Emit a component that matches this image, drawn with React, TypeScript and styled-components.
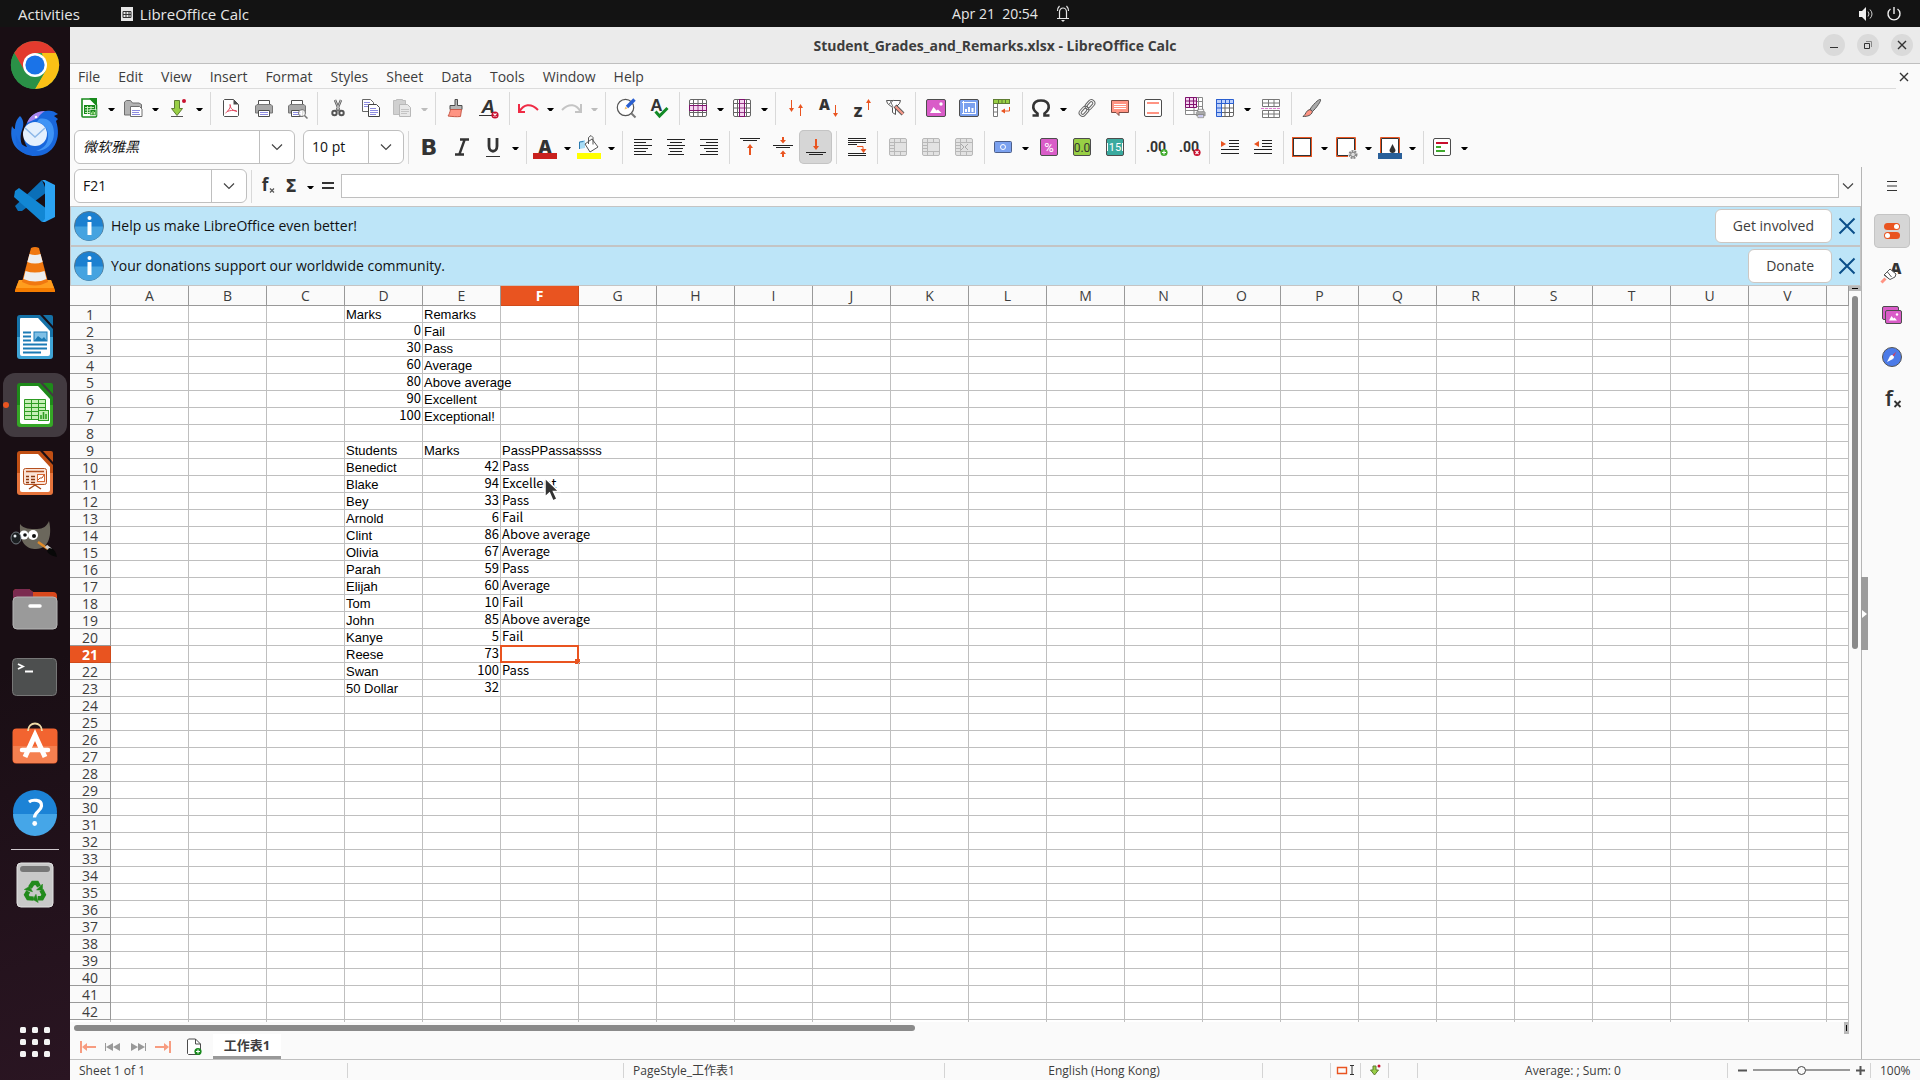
import React from 'react';
import styled, { createGlobalStyle, css } from 'styled-components';

const UI = '"Open Sans", "Noto Sans", "Noto Sans CJK SC", sans-serif';
const ORANGE = '#e95420';
const LINE = '#bfbfbf';

const GlobalStyle = createGlobalStyle`
  *, *::before, *::after { box-sizing: border-box; }
  html, body { margin: 0; padding: 0; overflow: hidden; }
  body { font-family: ${UI}; font-size: 14px; line-height: 20px; color: #3d3d3d; background: #1b1016; }
  button, input { font: inherit; color: inherit; }
  button { border: 0; padding: 0; background: none; }
  svg { display: block; flex: none; overflow: visible; }
`;

/* ---------- shell ---------- */

const Desktop = styled.div`
  display: flex;
  flex-direction: column;
  height: 100vh;
`;

const TopBar = styled.header`
  display: grid;
  grid-template-columns: 1fr auto 1fr;
  align-items: center;
  flex: none;
  height: 27px;
  background: #131313;
  color: #e6e6e6;
`;

const TopGroup = styled.div<{ $end?: boolean }>`
  display: flex;
  align-items: center;
  gap: 12px;
  padding: 0 18px;
  font-size: 15px;
  justify-content: ${p => (p.$end ? 'flex-end' : 'flex-start')};
`;

const TopButton = styled.button`
  display: flex;
  align-items: center;
  gap: 6px;
`;

const AppMenu = styled(TopButton)`
  margin-left: 28px;
`;

const Clock = styled(TopButton)`
  gap: 18px;
  padding-left: 102px;
  white-space: pre;
`;

const Workspace = styled.div`
  display: flex;
  flex: 1;
  min-height: 0;
`;

const Dock = styled.nav`
  display: flex;
  flex-direction: column;
  align-items: center;
  flex: none;
  gap: 4px;
  width: 70px;
  padding: 6px 3px;
  background: linear-gradient(165deg, #190e14 60%, #2a1522 100%);
`;

const DockItem = styled.button<{ $active?: boolean; $last?: boolean }>`
  position: relative;
  display: grid;
  place-items: center;
  flex: none;
  width: 64px;
  height: 64px;
  border-radius: 12px;
  background: ${p => (p.$active ? '#423a40' : 'transparent')};
  margin-top: ${p => (p.$last ? 'auto' : '0')};
`;

const RunningDot = styled.span`
  position: absolute;
  left: 0;
  top: 29px;
  width: 6px;
  height: 6px;
  border-radius: 50%;
  background: ${ORANGE};
`;

const DockRule = styled.hr`
  flex: none;
  width: 48px;
  height: 1px;
  margin: 0;
  border: 0;
  background: #cfc9cd;
`;

const Window = styled.main`
  display: flex;
  flex-direction: column;
  flex: 1;
  min-width: 0;
  background: #fafafa;
`;

const TitleBar = styled.div`
  display: grid;
  grid-template-columns: 1fr auto 1fr;
  align-items: center;
  flex: none;
  height: 37px;
  padding-right: 7px;
  background: #ebebeb;
  border-bottom: 1px solid ${LINE};
`;

const Title = styled.h1`
  grid-column: 2;
  margin: 0;
  padding: 2px 0 0 7px;
  font-size: 14px;
  font-weight: 700;
`;

const WindowControls = styled.div`
  display: flex;
  justify-content: flex-end;
  gap: 12px;
`;

const WindowButton = styled.button`
  display: grid;
  place-items: center;
  width: 22px;
  height: 22px;
  border-radius: 50%;
  background: #dadada;
`;

const MenuRow = styled.div`
  display: flex;
  flex: none;
  height: 25px;
`;

const MenuBar = styled.nav`
  display: flex;
  flex: 1;
  gap: 2px;
  padding-top: 2px;
  align-items: center;
  border-bottom: 1px solid #dcdcdc;
`;

const MenuItem = styled.button`
  padding: 0 8px;
`;

const CloseDocument = styled.button`
  display: grid;
  place-items: center;
  width: 24px;
  padding-right: 8px;
`;

/* ---------- toolbars ---------- */

const Toolbar = styled.div`
  display: flex;
  align-items: flex-start;
  flex: none;
  height: 39px;
  padding: 2px 4px 0;
`;

const ToolButton = styled.button<{ $drop?: boolean; $pressed?: boolean }>`
  display: flex;
  align-items: center;
  flex: none;
  gap: 7px;
  width: ${p => (p.$drop ? 44 : 33)}px;
  height: 34px;
  padding-left: ${p => (p.$drop ? 3 : 5)}px;
  ${p => p.$pressed && css`
    border-radius: 5px;
    background: #d6d6d6;
    box-shadow: inset 0 0 0 1px #c4c4c4;
  `}
`;

const Separator = styled.span`
  flex: none;
  width: 1px;
  height: 33px;
  margin: 1px 3px 0 4px;
  background: #d9d9d9;
`;

const Combo = styled.div<{ $width: number; $gap?: boolean }>`
  display: flex;
  flex: none;
  width: ${p => p.$width}px;
  height: 34px;
  margin-right: ${p => (p.$gap ? 8 : 0)}px;
  border: 1px solid ${LINE};
  border-radius: 6px;
  background: #fff;
  overflow: hidden;
`;

const ComboInput = styled.input<{ $italic?: boolean }>`
  flex: 1;
  min-width: 0;
  padding: 0 8px;
  border: 0;
  background: none;
  color: #111;
  font-style: ${p => (p.$italic ? 'italic' : 'normal')};
`;

const ComboArrow = styled.button`
  display: grid;
  place-items: center;
  width: 35px;
  border-left: 1px solid ${LINE};
`;

const Body = styled.div`
  display: flex;
  flex: 1;
  min-height: 0;
`;

const DocumentArea = styled.section`
  display: flex;
  flex-direction: column;
  flex: 1;
  min-width: 0;
`;

const FormulaRow = styled.div`
  display: flex;
  align-items: center;
  flex: none;
  height: 39px;
  padding: 0 0 1px 4px;
`;

const FormulaTools = styled.div`
  display: flex;
  align-items: center;
`;

const FormulaButton = styled.button<{ $width: number }>`
  display: flex;
  align-items: center;
  justify-content: center;
  gap: 4px;
  width: ${p => p.$width}px;
  height: 34px;
`;

const FormulaInput = styled.input`
  flex: 1;
  min-width: 0;
  height: 24px;
  padding: 0 4px;
  border: 1px solid ${LINE};
  background: #fff;
`;

const ExpandButton = styled.button`
  display: grid;
  place-items: center;
  width: 22px;
  padding-right: 4px;
`;

const InfoBar = styled.div`
  display: flex;
  align-items: center;
  flex: none;
  height: 40px;
  padding: 0 4px 0 3px;
  border: 1px solid #c4c4c4;
  background: #bde5f8;
  color: #111;
`;

const InfoText = styled.span`
  flex: 1;
  padding-left: 7px;
`;

const InfoAction = styled.button`
  height: 34px;
  padding: 0 17px;
  margin-right: 6px;
  border: 1px solid #cdc7c2;
  border-radius: 6px;
  background: #fff;
  color: #3d3d3d;
`;

const InfoClose = styled.button`
  display: grid;
  place-items: center;
  width: 18px;
  height: 34px;
`;

/* ---------- sheet ---------- */

const SheetArea = styled.div`
  display: flex;
  flex: 1;
  min-height: 0;
`;

const GridClip = styled.div`
  flex: 1;
  min-width: 0;
  overflow: hidden;
  background: #fff;
`;

const Grid = styled.table`
  width: 100%;
  table-layout: fixed;
  border-collapse: separate;
  border-spacing: 0;
  line-height: 16px;
`;

const HeadCell = styled.th<{ $active?: boolean }>`
  height: 20px;
  padding: 0;
  border-right: 1px solid #999;
  border-bottom: 1px solid #999;
  background: ${p => (p.$active ? ORANGE : '#fafafa')};
  color: ${p => (p.$active ? '#fff' : '#3d3d3d')};
  font-weight: ${p => (p.$active ? 700 : 400)};
  ${p => p.$active && css`border-color: #d04a1a;`}
`;

const RowHead = styled(HeadCell)`
  height: 17px;
  padding-top: 2px;
  line-height: 14px;
`;

type Face = 'arial' | 'cjk';

const Cell = styled.td<{ $face?: Face; $right?: boolean }>`
  position: relative;
  height: 17px;
  padding: ${p => (p.$face === 'cjk' ? 0 : 2)}px 1px 0;
  border-right: 1px solid ${LINE};
  border-bottom: 1px solid ${LINE};
  color: #000;
  font-size: 13px;
  line-height: 14px;
  white-space: nowrap;
  vertical-align: top;
  text-align: ${p => (p.$right ? 'right' : 'left')};
  font-family: ${p => (p.$face === 'cjk'
    ? '"Noto Sans CJK SC", sans-serif'
    : '"Liberation Sans", Arial, sans-serif')};
`;

const StubCell = styled(Cell)`
  height: 3px;
`;

const Selection = styled.span`
  position: absolute;
  inset: -1px;
  border: 2px solid ${ORANGE};
  &::after {
    content: '';
    position: absolute;
    right: -3px;
    bottom: -3px;
    width: 5px;
    height: 5px;
    background: ${ORANGE};
  }
`;

const Pointer = styled.svg`
  position: absolute;
  left: 42px;
  top: 0;
  z-index: 2;
`;

const VScroll = styled.div`
  display: flex;
  flex-direction: column;
  align-items: center;
  width: 12px;
`;

const SplitHandle = styled.span<{ $vertical?: boolean }>`
  display: grid;
  place-items: center;
  flex: none;
  width: ${p => (p.$vertical ? '5px' : '12px')};
  height: ${p => (p.$vertical ? '12px' : '5px')};
  background: #b9b9b9;
  &::after {
    content: '';
    width: ${p => (p.$vertical ? '1px' : '6px')};
    height: ${p => (p.$vertical ? '6px' : '1px')};
    background: #000;
  }
`;

const VThumb = styled.span`
  width: 6px;
  height: 48%;
  margin-top: 5px;
  border-radius: 3px;
  background: #8a8a8a;
`;

const HScroll = styled.div`
  display: flex;
  align-items: center;
  justify-content: space-between;
  flex: none;
  height: 12px;
  padding: 0 12px 0 4px;
`;

const HThumb = styled.span`
  width: 47.4%;
  height: 6px;
  border-radius: 3px;
  background: #8a8a8a;
`;

const TabRow = styled.div`
  display: flex;
  flex: none;
  align-items: stretch;
  height: 25px;
  padding-left: 5px;
`;

const TabNav = styled.button`
  display: grid;
  place-items: center;
  width: 25px;
`;

const AddSheet = styled(TabNav)`
  width: 38px;
`;

const SheetTab = styled.button`
  width: 68px;
  background: #fff;
  border-bottom: 3px solid #999;
  font-size: 13px;
  font-weight: 700;
`;

/* ---------- sidebar ---------- */

const Sidebar = styled.aside`
  position: relative;
  display: flex;
  flex-direction: column;
  align-items: center;
  flex: none;
  gap: 8px;
  width: 59px;
  padding-top: 2px;
  border-left: 1px solid #b5b5b5;
`;

const SideButton = styled.button<{ $active?: boolean; $menu?: boolean }>`
  display: grid;
  place-items: center;
  width: 36px;
  height: 34px;
  margin: 0 0 ${p => (p.$menu ? 3 : 0)}px 2px;
  border-radius: 5px;
  ${p => p.$active && css`
    background: #d6d6d6;
    box-shadow: inset 0 0 0 1px #c4c4c4;
  `}
`;

const SideHandle = styled.button`
  position: absolute;
  left: -1px;
  top: 46%;
  display: grid;
  place-items: center;
  width: 7px;
  height: 73px;
  background: #9c9c9c;
`;

/* ---------- status bar ---------- */

const StatusBar = styled.footer`
  display: grid;
  grid-template-columns: 278px 276px 321px 318px 68px 30px 28px 29px 1fr 143px 49px;
  align-items: center;
  flex: none;
  height: 21px;
  border-top: 1px solid ${LINE};
`;

const StatusItem = styled.div<{ $align?: 'left' | 'center' | 'right' }>`
  display: flex;
  align-items: center;
  justify-content: ${p => p.$align || 'center'};
  height: 15px;
  padding: 0 8px 0 9px;
  border-right: 1px solid #d4d4d4;
  font-size: 12px;
  line-height: 15px;
  white-space: nowrap;
  &:last-child { border-right: 0; }
`;

const ZoomItem = styled(StatusItem)`
  gap: 6px;
  padding: 0 5px 0 10px;
`;

const ZoomSlider = styled.input`
  flex: 1;
  min-width: 0;
  height: 12px;
  margin: 0;
  appearance: none;
  background: linear-gradient(#999, #999) center / 100% 2px no-repeat;
  &::-webkit-slider-thumb {
    appearance: none;
    width: 9px;
    height: 9px;
    border: 1px solid #444;
    border-radius: 50%;
    background: #fafafa;
  }
`;

/* ---------- icon drawings (24 x 24 unless noted) ---------- */

const G = '#4d4d4d';
const R = '#c8102e';

const Svg = ({ children, w = 24, h = 24, vb }: { children: React.ReactNode; w?: number; h?: number; vb?: string }) => (
  <svg width={w} height={h} viewBox={vb || `0 0 ${w} ${h}`} fill="none" aria-hidden="true">{children}</svg>
);

const Letter = ({ x, y, s, c = '#333', i, w = 700, f = 'Liberation Sans', children }: {
  x: number; y: number; s: number; c?: string; i?: boolean; w?: number; f?: string; children: string;
}) => (
  <text x={x} y={y} fontSize={s} fill={c} fontWeight={w} fontStyle={i ? 'italic' : 'normal'} fontFamily={`"${f}", sans-serif`} textAnchor="middle">{children}</text>
);

const Badge = ({ x, y, c, plus }: { x: number; y: number; c: string; plus?: boolean }) => (
  <g>
    <circle cx={x} cy={y} r="3.6" fill={c} />
    <path d={plus ? `M${x - 2} ${y}h4M${x} ${y - 2}v4` : `M${x - 1.5} ${y - 1.5}l3 3m0-3l-3 3`} stroke="#fff" strokeWidth="1.1" />
  </g>
);

const printer = (
  <g>
    <path d="M6.5 9V4.5h11V9" fill="#fff" stroke={G} />
    <path d="M5 8.500h14l1.500 1.500v7H3.500v-7z" fill="#a8a8a8" stroke="#777" />
    <path d="M6.500 14.500h11v6h-11z" fill="#fff" stroke={G} />
    <path d="M8 16.500h8M8 18.500h8" stroke="#8d8ce0" />
  </g>
);

const tableGrid = (c: string, over?: React.ReactNode) => (
  <g>
    <rect x="3.500" y="3.500" width="17" height="17" rx="1.500" fill="#fff" stroke={c} />
    <path d="M3.500 7.500h17M3.500 16.500h17M7.500 3.500v17M12 3.500v17M16.500 3.500v17M3.500 12h17" stroke={c} />
    {over}
  </g>
);

const mergeBase = (
  <g>
    <rect x="3.500" y="3.500" width="17" height="17" rx="1.500" fill="#e2e2e2" stroke="#b8b8b8" />
    <path d="M3.500 7.500h17M3.500 16.500h17M8.500 3.500v17M14.500 3.500v4M14.500 16.500v4M3.500 10.500h5M3.500 13.500h5" stroke="#b8b8b8" />
  </g>
);

const lines = (list: number[][], c = '#222', sw = 1) => list.map(([x1, x2, y], k) => (
  <path key={k} d={`M${x1} ${y}.5H${x2}`} stroke={c} strokeWidth={sw} />
));

const icons: Record<string, React.ReactNode> = {
  new: <>
    <path d="M5 3h8.500l6 6v11a1 1 0 0 1-1 1H6a1 1 0 0 1-1-1z" fill="#fff" stroke="#188a1c" strokeWidth="1.600" />
    <path d="M12 2h8v8l-2.500-3z" fill="#188a1c" />
    <rect x="7" y="9" width="11" height="9" fill="#188a1c" />
    <path d="M8 11.500h9M8 14h9M8 16.500h6M10.500 10v8M14 10v5" stroke="#d6f5c8" strokeWidth=".9" />
    <rect x="13" y="13.500" width="6" height="6" fill="#188a1c" stroke="#fff" strokeWidth=".6" />
    <path d="M14.500 18.500v-2M16 18.500v-3.500M17.500 18.500v-2.500" stroke="#b8f09c" />
  </>,
  open: <>
    <path d="M3.500 19V6l2-1.500h4L11.500 7H18l2.500 1.500V19z" fill="#b3b3b3" stroke="#6e6e6e" />
    <path d="M9.500 10.500h9l2.500 2.500v7.500H9.500z" fill="#fff" stroke="#6e6e6e" />
    <path d="M11 14.500h8M11 16.500h7M11 18.500h8" stroke="#8d8ce0" />
  </>,
  save: <>
    <path d="M9.500 4.500h5v8h3l-5.500 7-5.500-7h3z" fill="#98cf45" stroke="#5f7d33" />
    <path d="M6 20.500h12" stroke="#555" />
    <circle cx="19" cy="5" r="2" fill={R} />
  </>,
  pdf: <>
    <path d="M4.500 4.500l1-1h9l5 5v11l-1 1h-13l-1-1z" fill="#fff" stroke={G} />
    <path d="M14.500 3.500v5h5z" fill={G} />
    <path d="M11 8.500c1.500 2-2 7-4.500 8.500M11 8.500c0 4 3.500 6.500 7 7M8 15.500c3-1 6-1.500 9.500-.8" stroke="#e0485e" />
  </>,
  print: printer,
  preview: <>
    {printer}
    <circle cx="17" cy="17" r="3.500" fill="#fff" fillOpacity=".8" stroke="#777" />
    <path d="M19.500 19.500l3 3" stroke="#777" strokeWidth="1.500" />
  </>,
  cut: <>
    <path d="M9 4l4.500 11M15 4l-4.500 11" stroke="#555" strokeWidth="2.400" />
    <path d="M9 4l4.500 11M15 4l-4.500 11" stroke="#ddd" strokeWidth=".8" />
    <circle cx="8.500" cy="17" r="2.200" stroke="#555" strokeWidth="2" />
    <circle cx="15.500" cy="17" r="2.200" stroke="#555" strokeWidth="2" />
  </>,
  copy: <>
    <path d="M3.500 3.500h8l3 3v9h-11z" fill="#fff" stroke="#666" />
    <path d="M5 6.500h6M5 8.500h4M5 10.500h4" stroke="#8d8ce0" />
    <path d="M9.500 8.500h8l3 3v9h-11z" fill="#fff" stroke="#444" />
    <path d="M11 12.500h6M11 14.500h8M11 16.500h8M11 18.500h6" stroke="#8d8ce0" />
  </>,
  paste: <>
    <path d="M3.500 4.500h3v-1h6v1h3v14h-12z" fill="#d0d0d0" stroke="#bdbdbd" />
    <path d="M9.500 8.500h8l3 3v9h-11z" fill="#e8e8e8" stroke="#b8b8b8" />
    <path d="M11 13.500h8M11 15.500h8M11 17.500h6" stroke="#c4c4c4" />
  </>,
  clone: <>
    <path d="M11 3.500h2.500v6h4.500v4H6v-4h5z" fill="#b5b5b5" stroke={G} />
    <path d="M6.500 13.500h11l-1 7c-4 .5-8.500 0-12.500-.5 1-1 2-4 2.500-6.500z" fill="#ff9483" stroke="#c85a49" />
  </>,
  clear: <>
    <Letter x={11} y={17} s={19} i>A</Letter>
    <path d="M2 19.500h14" stroke="#333" />
    <Badge x={18} y={19} c={R} />
  </>,
  undo: <path d="M3 8v8h6M3.500 15.500c4-7 11-9 18.500-1.500" stroke="#ef2b45" strokeWidth="2" />,
  redo: <path d="M21 8v8h-6M20.500 15.500c-4-7-11-9-18.500-1.500" stroke="#c4c4c4" strokeWidth="2" />,
  find: <>
    <circle cx="11.500" cy="11.500" r="8.200" fill="#fff" stroke="#555" strokeWidth="1.200" />
    <path d="M17.500 17.500l4 4" stroke="#777" strokeWidth="2" />
    <path d="M13 11l7.500-7.500" stroke="#2a5fd0" strokeWidth="3.400" />
    <path d="M10.500 13.500l1-3 2 2z" fill="#f5c06a" />
  </>,
  spell: <>
    <Letter x={9.500} y={15} s={17}>A</Letter>
    <path d="M8.500 15.500l4 4.500 8-8" stroke="#128a25" strokeWidth="3" />
  </>,
  row: tableGrid('#666', <><rect x="3.500" y="9.500" width="17" height="5" fill="#f4d5f0" stroke="#81136f" /><path d="M7.500 10v5M12 10v5M16.500 10v5" stroke="#81136f" strokeWidth=".8" /></>),
  column: tableGrid('#666', <><rect x="9.500" y="3.500" width="5" height="17" fill="#f4d5f0" stroke="#81136f" /><path d="M10 7.500h5M10 12h5M10 16.500h5" stroke="#81136f" strokeWidth=".8" /></>),
  sort: <>
    <path d="M7.500 4v11M16.500 9v11" stroke={ORANGE} />
    <path d="M5 12h5l-2.500 4zM14 12h5l-2.500-4z" fill={ORANGE} />
  </>,
  asc: <><Letter x={7.500} y={14} s={15} f="Open Sans" w={800}>A</Letter><path d="M18.500 9v9" stroke={ORANGE} /><path d="M16 17h5l-2.500 4z" fill={ORANGE} /></>,
  desc: <><Letter x={8} y={21} s={14} f="Open Sans" w={800}>Z</Letter><path d="M18.500 6v8" stroke={ORANGE} /><path d="M16 7h5l-2.500-4z" fill={ORANGE} /></>,
  filter: <>
    <path d="M3.500 4.500h14l-1 3-4 4v7l-3-2v-5l-5-4z" fill="#fff" stroke="#555" />
    <path d="M7 4l3 7M11 4l-5 4" stroke="#777" />
    <path d="M12 10l8 8" stroke="#555" strokeWidth="4" />
    <path d="M12.500 10.500l7.500 7.500" stroke="#f5998a" strokeWidth="2.400" />
  </>,
  image: <>
    <rect x="2.500" y="3.500" width="19" height="17" rx="1.500" fill="#d95cc8" stroke={G} />
    <path d="M6 17l3.500-6 3 3.500 1.500-1 3.500 3.500z" fill="#fff" />
    <circle cx="17" cy="8" r="1.700" fill="#fff" />
  </>,
  chart: <>
    <rect x="2.500" y="3.500" width="19" height="17" rx="1.500" fill="#7ba1ef" stroke={G} />
    <path d="M6.500 5v13M5 17.500h14M5 6.500h14M18.500 6v12" stroke="#fff" />
    <path d="M9 16v-3M12 16v-5M15.500 16v-4" stroke="#fff" strokeWidth="2" />
  </>,
  pivot: <>
    <path d="M3.500 7.500h4v13h-4zM3.500 11.500h4M3.500 16h4" fill="#fff" stroke="#777" />
    <rect x="3.500" y="3.500" width="16" height="4" fill="#98cf45" stroke="#5f7d33" />
    <path d="M8.500 3.500v4M12 3.500v4M15.500 3.500v4" stroke="#5f7d33" />
    <path d="M19.500 11v4h-7" stroke={ORANGE} /><path d="M11 15l4-2.500v5z" fill={ORANGE} />
  </>,
  omega: <path d="M3.500 19.500h5v-2C2 13 3 4.500 12 4.500S22 13 15.500 17.500v2h5" stroke="#333" strokeWidth="2.600" />,
  link: <g transform="rotate(-48 12 12)" stroke="#666" strokeWidth="1">
    <rect x="2" y="8.500" width="11" height="7" rx="3.500" /><rect x="4" y="10.500" width="7" height="3" rx="1.500" />
    <rect x="11" y="8.500" width="11" height="7" rx="3.500" /><rect x="13" y="10.500" width="7" height="3" rx="1.500" />
  </g>,
  comment: <>
    <path d="M3.500 4.500h17v12H11v3l-3-3H3.500z" fill="#ff9483" stroke="#7a4a42" />
    <path d="M6 8.500h12M6 10.500h12M6 12.500h12" stroke="#fff" />
  </>,
  header: <>
    <rect x="3.500" y="3.500" width="17" height="17" rx="1.500" fill="#fff" stroke={G} />
    <path d="M6 7h12M6 17h12" stroke="#ff9483" strokeWidth="2" />
  </>,
  range: <>
    <path d="M3.500 1.500h17v17h-17zM12 1.500v17M16.500 1.500v17M3.500 14.500h17M3.500 10.500h17M3.500 5.500h17" fill="#fff" stroke="#888" />
    <path d="M3.500 1.500h11v10h-11zM7.500 1.500v10M11.500 1.500v10M3.500 5h11M3.500 8.500h11" fill="#f4d5f0" stroke="#81136f" />
    <g transform="translate(12.500 11) scale(.52)">{printer}</g>
  </>,
  freeze: <>
    {tableGrid('#666')}
    <path d="M3.500 3.500h17v4h-17zM3.500 3.500h5v17h-5z" fill="#bcd0fb" stroke="#2a5fd0" />
    <path d="M3.500 7.500h17M3.500 12h5M3.500 16.500h5M12.500 3.500v4M16.500 3.500v4M8.500 3.500v17" stroke="#2a5fd0" />
  </>,
  split: <>
    <path d="M3.500 3.500h17v7h-17zM3.500 14.500h17v7h-17zM3.500 7h17M3.500 18h17M9.500 3.500v7M15 3.500v7M9.500 14.500v7M15 14.500v7" fill="#fff" stroke="#777" />
    <path d="M2 12.500h20" stroke="#e07bd2" strokeDasharray="3 1" />
  </>,
  brush: <>
    <path d="M20.500 3.500c1 1-4 8.500-8 12l-2.500-2c2-4 9-11 10.500-10z" fill="#aaa" stroke="#555" />
    <path d="M10 13.500l2.500 2c-1 4-5 5-9.500 5 3-2 3-6.500 7-7z" fill="#ff9483" stroke="#555" />
  </>,
  bold: <Letter x={12} y={20} s={22} f="DejaVu Sans">B</Letter>,
  italic: <path d="M10 4.500h9M5 19.500h9M14.500 5L9.500 19" stroke="#333" strokeWidth="2.400" />,
  underline: <><path d="M8 3v8c0 7 8 7 8 0V3" stroke="#333" strokeWidth="2.800" /><path d="M5 21.500h14" stroke="#333" /></>,
  fontColor: <><Letter x={12} y={18} s={18} f="Open Sans" w={800}>A</Letter><path d="M0 21h24" stroke="#c9211e" strokeWidth="6" /></>,
  highlight: <>
    <path d="M2.500 14V6.500L8 5v8z" fill="#a8dcf5" /><path d="M2.500 14V7l4-.5" stroke="#2a7ab0" />
    <path d="M8 9l7-5 6 8-8 5z" fill="#fff" stroke="#555" /><path d="M11.500 9V2.500l2.500-2 2 2v7" stroke="#555" />
    <path d="M0 21h24" stroke="#ff0" strokeWidth="6" />
  </>,
  left: lines([[3, 21, 4], [3, 15, 7], [3, 21, 10], [3, 17, 13], [3, 15, 16], [3, 21, 19]]),
  center: lines([[3, 21, 4], [6, 18, 7], [3, 21, 10], [5, 19, 13], [6, 18, 16], [4, 20, 19]]),
  right: lines([[3, 21, 4], [9, 21, 7], [3, 21, 10], [7, 21, 13], [9, 21, 16], [3, 21, 19]]),
  top: <>{lines([[2, 22, 3], [5, 19, 5]])}<path d="M12 12v8" stroke={ORANGE} strokeWidth="2" /><path d="M9 13h6l-3-4z" fill={ORANGE} /></>,
  middle: <>{lines([[2, 22, 10], [5, 19, 12]])}<path d="M12 2v4M12 19v3" stroke={ORANGE} strokeWidth="2" /><path d="M9 5h6l-3 3.500zM9 19h6l-3-3.500z" fill={ORANGE} /></>,
  bottom: <>{lines([[2, 22, 17], [5, 19, 19]])}<path d="M12 4v8" stroke={ORANGE} strokeWidth="2" /><path d="M9 11h6l-3 4z" fill={ORANGE} /></>,
  wrap: <>{lines([[3, 21, 3], [3, 21, 5], [3, 21, 7], [3, 12, 9], [3, 21, 18], [3, 21, 20]])}<path d="M12 11.500h6v3" stroke={ORANGE} /><path d="M15.500 14h6L18.500 18z" fill={ORANGE} /></>,
  mergeA: mergeBase,
  mergeB: mergeBase,
  mergeC: <>{mergeBase}<path d="M9 9l3 3-3 3M16 9l-3 3 3 3" stroke="#aaa" /></>,
  currency: <><rect x="3.500" y="6.500" width="17" height="11" rx="1" fill="#7ba1ef" stroke="#4d5f8a" /><circle cx="12" cy="12" r="2.500" stroke="#fff" /></>,
  percent: <><rect x="3.500" y="3.500" width="17" height="17" rx="1.500" fill="#d95cc8" stroke={G} /><Letter x={12} y={17} s={13} c="#fff" w={400} f="Roboto">%</Letter></>,
  number: <><rect x="3.500" y="3.500" width="17" height="17" rx="1.500" fill="#98cf45" stroke={G} /><Letter x={12} y={17} s={12} w={400} f="Roboto">0.0</Letter></>,
  date: <><rect x="3.500" y="3.500" width="17" height="17" rx="1.500" fill="#3aaa9f" stroke={G} /><Letter x={12} y={16} s={11} c="#fff" w={400} f="Roboto">15</Letter><path d="M4.500 8v8M19.500 8v8" stroke="#fff" /></>,
  addDec: <><Letter x={12} y={17} s={14} f="Roboto">.00</Letter><Badge x={20} y={17.500} c="#3faa2c" plus /></>,
  delDec: <><Letter x={12} y={17} s={14} f="Roboto">.00</Letter><Badge x={20} y={17.500} c={R} /></>,
  indent: <>{lines([[11, 21, 5], [11, 21, 8], [11, 21, 11], [3, 21, 14], [3, 21, 18]], '#222')}<path d="M3 6l5 3-5 3z" fill={ORANGE} /></>,
  outdent: <>{lines([[11, 21, 5], [11, 21, 8], [11, 21, 11], [3, 21, 14], [3, 21, 18]], '#222')}<path d="M8 6L3 9l5 3z" fill={ORANGE} /></>,
  border: <><rect x="2.500" y="2.500" width="19" height="19" fill="#fff" stroke={ORANGE} /><rect x="3.500" y="3.500" width="17" height="17" stroke="#333" /></>,
  borderStyle: <><path d="M21.500 15V2.500h-19v19H14" fill="#fff" stroke={ORANGE} /><path d="M20.500 15V3.500h-17v17H14" stroke="#333" /><circle cx="19" cy="19.500" r="3" stroke="#888" strokeWidth="3" strokeDasharray="1.700 .8" /><circle cx="19" cy="19.500" r="2.300" fill="#ddd" stroke="#888" /></>,
  borderColor: <><path d="M2.500 21V2.500h19V21" fill="#fff" stroke={ORANGE} /><path d="M3.500 21V3.500h17V21" stroke="#333" /><path d="M14.500 9l3 6a3 3 0 1 1-6 0z" fill="#333" /><path d="M0 21h24" stroke="#2a6099" strokeWidth="6" /></>,
  cond: <><rect x="3.500" y="3.500" width="17" height="17" rx="1.500" fill="#fff" stroke={G} /><path d="M6 8h12" stroke={R} strokeWidth="2" /><path d="M6 12h5M6 16h9" stroke="#3faa2c" strokeWidth="2" /></>,
  sigma: <Letter x={12} y={18} s={17} f="DejaVu Sans">Σ</Letter>,
  fx: <><Letter x={10} y={17} s={17} f="Open Sans">f</Letter><path d="M15 14.500l4 4m0-4l-4 4" stroke="#555" strokeWidth="1.200" /></>,
  equals: <path d="M6 9h12M6 14h12" stroke="#333" strokeWidth="2" />,
  sideProps: <>
    <rect x="4" y="4" width="16" height="7" rx="3.500" fill={ORANGE} /><circle cx="16.500" cy="7.500" r="2.500" fill="#fff" />
    <rect x="4" y="13" width="16" height="7" rx="3.500" fill={ORANGE} /><circle cx="7.500" cy="16.500" r="2.500" fill="#fff" />
  </>,
  sideStyles: <>
    <Letter x={16} y={13} s={15} f="Open Sans" w={800}>A</Letter>
    <path d="M1.500 21.500l4-4" stroke="#ff9483" strokeWidth="3" />
    <path d="M4 14l6-6 6 5-1 3-5 2.500zM5 14l4 4M7.500 11l4 5" fill="#fff" stroke="#555" />
  </>,
  sideGallery: <>
    <rect x="2.500" y="3.500" width="16" height="13" rx="1.500" fill="#d95cc8" stroke={G} />
    <rect x="5.500" y="7.500" width="16" height="13" rx="1.500" fill="#d95cc8" stroke={G} />
    <path d="M9 17.500l2.500-4.500 2 2.500 1-1 2.500 3z" fill="#fff" /><circle cx="17" cy="11.500" r="1.200" fill="#fff" />
  </>,
  sideNav: <>
    <circle cx="12" cy="12" r="9.500" fill="#4c7be8" stroke="#555" />
    <path d="M7 17l3-6 3 3z" fill="#fff" /><circle cx="12" cy="12" r="2" fill="#fff" /><path d="M12.500 10l4-3.500-2.500 5z" fill="#d04060" />
  </>,
  sideFx: <><Letter x={9} y={19} s={22} w={600} f="Open Sans">f</Letter><path d="M14.500 14l6 6m0-6l-6 6" stroke="#333" strokeWidth="1.800" /></>,
};

const Arrow = ({ muted }: { muted?: boolean }) => (
  <Svg w={7} h={24}><path d="M0 12h7l-2.500 3h-2z" fill={muted ? '#bdbdbd' : '#000'} /></Svg>
);
const Chevron = () => <Svg w={12} h={12}><path d="M1 3.500l5 5 5-5" stroke="#444" strokeWidth="1.200" /></Svg>;

type Tool = { id: string; label: string; drop?: boolean; muted?: boolean; pressed?: boolean } | '|';
const t = (id: string, label: string, drop?: boolean, extra?: { muted?: boolean; pressed?: boolean }): Tool => ({ id, label, drop, ...extra });

const standardTools: Tool[] = [
  t('new', 'New', true), t('open', 'Open', true), t('save', 'Save', true), '|',
  t('pdf', 'Export as PDF'), t('print', 'Print'), t('preview', 'Print preview'), '|',
  t('cut', 'Cut'), t('copy', 'Copy'), t('paste', 'Paste', true, { muted: true }), '|',
  t('clone', 'Clone formatting'), t('clear', 'Clear formatting'), '|',
  t('undo', 'Undo', true), t('redo', 'Redo', true, { muted: true }), '|',
  t('find', 'Find and replace'), t('spell', 'Spelling'), '|',
  t('row', 'Row', true), t('column', 'Column', true), '|',
  t('sort', 'Sort'), t('asc', 'Sort ascending'), t('desc', 'Sort descending'), t('filter', 'AutoFilter'), '|',
  t('image', 'Insert image'), t('chart', 'Insert chart'), t('pivot', 'Insert pivot table'), '|',
  t('omega', 'Insert special character', true), t('link', 'Insert hyperlink'), t('comment', 'Insert comment'), t('header', 'Headers and footers'), '|',
  t('range', 'Define print area'), t('freeze', 'Freeze rows and columns', true), t('split', 'Split window'), '|',
  t('brush', 'Show draw functions'),
];

const formatTools: Tool[] = [
  '|', t('bold', 'Bold'), t('italic', 'Italic'), t('underline', 'Underline', true), '|',
  t('fontColor', 'Font color', true), t('highlight', 'Background color', true), '|',
  t('left', 'Align left'), t('center', 'Center horizontally'), t('right', 'Align right'), '|',
  t('top', 'Align top'), t('middle', 'Center vertically'), t('bottom', 'Align bottom', false, { pressed: true }), '|',
  t('wrap', 'Wrap text'), '|',
  t('mergeA', 'Merge and center', false, { muted: true }), t('mergeB', 'Merge cells', false, { muted: true }), t('mergeC', 'Unmerge cells', false, { muted: true }), '|',
  t('currency', 'Format as currency', true), t('percent', 'Format as percent'), t('number', 'Format as number'), t('date', 'Format as date'), '|',
  t('addDec', 'Add decimal place'), t('delDec', 'Delete decimal place'), '|',
  t('indent', 'Increase indent'), t('outdent', 'Decrease indent'), '|',
  t('border', 'Borders', true), t('borderStyle', 'Border style', true), t('borderColor', 'Border color', true), '|',
  t('cond', 'Conditional formatting', true),
];

const Tools = ({ items }: { items: Tool[] }) => (
  <>
    {items.map((item, k) => item === '|' ? <Separator key={k} /> : (
      <ToolButton key={item.id} type="button" aria-label={item.label} $drop={item.drop} $pressed={item.pressed} disabled={item.muted}>
        <Svg>{icons[item.id]}</Svg>
        {item.drop && <Arrow muted={item.muted} />}
      </ToolButton>
    ))}
  </>
);

/* ---------- dock drawings ---------- */

const docFrame = (id: string, a: string, b: string, inner: React.ReactNode) => (
  <>
    <defs><linearGradient id={id} x1="0" y1="0" x2="0" y2="1"><stop offset=".5" stopColor={a} /><stop offset=".5" stopColor={b} /></linearGradient></defs>
    <path d="M9 2h20l13 14v27a3 3 0 0 1-3 3H9a3 3 0 0 1-3-3V5a3 3 0 0 1 3-3z" fill={`url(#${id})`} />
    <path d="M10 5h17l12 13v23a2 2 0 0 1-2 2H11a2 2 0 0 1-2-2V6a1 1 0 0 1 1-1z" fill="#fff" />
    <path d="M32 2h8a2 2 0 0 1 2 2v9z" fill={a} />
    {inner}
  </>
);

const dockIcons: { label: string; art: React.ReactNode; active?: boolean }[] = [
  { label: 'Google Chrome', art: <>
    <circle cx="24" cy="24" r="24" fill="#34a853" />
    <path d="M3.200 12A24 24 0 0 1 44.800 12H24L13.600 30z" fill="#e33b2e" />
    <path d="M44.800 12A24 24 0 0 1 24 48l10.400-18L31 12z" fill="#fbc116" />
    <path d="M3.200 12L13.600 30 24 36l10.400-6L24 48A24 24 0 0 1 3.200 12z" fill="#2a9147" />
    <circle cx="24" cy="24" r="12" fill="#fff" /><circle cx="24" cy="24" r="9.600" fill="#1a73e8" />
  </> },
  { label: 'Thunderbird', art: <g transform="translate(0 1)">
    <path d="M9 6c4 4 4 9 2 14-3 8-1 16 5 24C4 41-2 30 1 16c1 2 2 3 3 3 0-5 1-9 5-13z" fill="#1d6fe0" />
    <path d="M16 13C19 5 27 1 35 1c5-1 8 0 12 3l-4 2 4 3-2 2c6 17-2 35-21 35C11 46 3 37 5 25c3 8 7 11 11 12-4-7-5-16 0-24z" fill="#1867dc" />
    <path d="M16 13C19 5 26 1 34 1c-3 2-6 4-7 7-3 1-7 3-11 5z" fill="#a987f0" />
    <path d="M28 9c7-2 15 2 15 14 0 11-8 18-18 18 9-3 13-9 12-17-1-7-5-11-11-12z" fill="#3f94f5" />
    <circle cx="24" cy="24" r="12" fill="#e4f0fd" />
    <path d="M14 18l10 9 10-9" stroke="#8db8e8" strokeWidth="1.500" />
    <circle cx="25" cy="7" r="1.300" fill="#fff" />
  </g> },
  { label: 'Visual Studio Code', art: <>
    <path d="M31 3L4 29l3 5h4l25-19z" fill="#0b6fb8" />
    <path d="M4 14l4-3 28 21v11l-5 2L3 20z" fill="#1287d4" />
    <path d="M31 3l3 0 10 5v32l-10 5h-3l3-3V6z" fill="#2ba3f3" />
  </> },
  { label: 'VLC', art: <>
    <path d="M8 35h32l4 10v2H4v-2z" fill="#f57c00" /><path d="M8 35h32l3 8H5z" fill="#ff9d1e" />
    <path d="M20 3q4-2 8 0l9 34q-13 7-26 0z" fill="#f07810" />
    <path d="M18.500 9q5.500 2 11 0l2.200 8q-7.700 3-15.400 0zM14.500 26q9.500 3 19 0l2 8q-11 5-23 0z" fill="#eee" />
  </> },
  { label: 'LibreOffice Writer', art: docFrame('dw', '#1572a8', '#3fa4d6', <>
    <path d="M12 19.500h8M12 23.500h8M12 27.500h8M12 31.500h24M12 35.500h24M12 39.500h18" stroke="#1b7bb5" strokeWidth="2" />
    <rect x="23" y="19" width="13" height="9" fill="#7fc0e6" stroke="#1b7bb5" /><path d="M23 28l4-5 4 3 2-2 3 4z" fill="#1b7bb5" />
  </>) },
  { label: 'LibreOffice Calc', active: true, art: docFrame('dc', '#1e8a1a', '#35a726', <>
    <path d="M13.500 18.500h21v20h-21zM13.500 22.500h21M13.500 26.500h21M13.500 30.500h21M13.500 34.500h21M20.500 18.500v20M27.500 18.500v20" fill="#c5efb5" stroke="#2d9b22" />
    <rect x="27.500" y="29.500" width="10" height="10" fill="#c5efb5" stroke="#2d9b22" /><path d="M30 38v-4M32.500 38v-7M35 38v-5" stroke="#2d9b22" strokeWidth="1.600" />
  </>) },
  { label: 'LibreOffice Impress', art: docFrame('di', '#c04f14', '#e5743c', <>
    <rect x="12.500" y="19.500" width="23" height="16" rx="2" fill="#fbe3d6" stroke="#b5501f" />
    <path d="M15 22.500h18" stroke="#b5501f" strokeWidth="1.500" /><path d="M15 27.500h3M20 27.500h4M15 30.500h3M20 30.500h4M15 33.500h3M20 33.500h4" stroke="#8a3a10" strokeWidth="1.600" />
    <rect x="26.500" y="25.500" width="7" height="7" fill="#fff" stroke="#d86a35" /><path d="M27 31l2-2 2 0 2-3" stroke="#b5501f" />
    <path d="M24 36l-6 4M24 36l6 4" stroke="#a34514" strokeWidth="1.500" />
  </>) },
  { label: 'GIMP', art: <g transform="translate(0 1)">
    <path d="M9 6c4 5 10 5 17 5 6 0 10-3 12-8 3 12 1 28-13 28C16 31 8 26 9 6z" fill="#6b675c" />
    <circle cx="13" cy="17" r="4.500" fill="#fff" /><circle cx="22" cy="17" r="5" fill="#fff" /><circle cx="14" cy="17" r="1.800" fill="#111" /><circle cx="23" cy="18" r="2" fill="#111" />
    <ellipse cx="5" cy="20" rx="5" ry="6" fill="#1c1f22" stroke="#8a949c" strokeWidth=".8" /><circle cx="4" cy="18" r="1.500" fill="#e8eef2" />
    <path d="M27 24l10 7" stroke="#e08a28" strokeWidth="2.600" /><path d="M35 28l5 4" stroke="#ccc" strokeWidth="3.500" /><path d="M38 30c4 0 7 3 8 9-5-1-9-3-10-6z" fill="#080808" />
  </g> },
  { label: 'Files', art: <>
    <path d="M2 15V8a4 4 0 0 1 4-4h12l4 3h20a4 4 0 0 1 4 4v8z" fill="#d9481c" /><path d="M2 15V8a4 4 0 0 1 4-4h12l4 3v8z" fill="#7b2b50" />
    <rect x="2" y="12" width="44" height="32" rx="4" fill="#9a9a9a" stroke="#b5b5b5" /><path d="M19 21h10" stroke="#fff" strokeWidth="3.500" strokeLinecap="round" />
  </> },
  { label: 'Terminal', art: <>
    <rect x="1.500" y="5.500" width="44" height="37" rx="4" fill="#4d4f4f" stroke="#777" />
    <path d="M7 11l5 2.500-5 2.500M14 18.500h8" stroke="#fff" strokeWidth="1.800" />
  </> },
  { label: 'Ubuntu Software', art: <g transform="translate(0 -2)">
    <rect x="1.500" y="9.500" width="45" height="35" rx="4" fill="#f26430" /><path d="M2 27h44v13a4 4 0 0 1-4 4H6a4 4 0 0 1-4-4z" fill="#f58050" />
    <path d="M14 38L24 16l10 22" stroke="#fff" strokeWidth="5" /><path d="M11 31h26" stroke="#fff" strokeWidth="4.500" strokeLinecap="round" />
    <path d="M17 12c0-10 14-10 14 0" stroke="#f0dba8" strokeWidth="1.800" />
  </g> },
  { label: 'Help', art: <>
    <circle cx="24" cy="23" r="22" fill="#1c83d6" /><path d="M2 25a22 22 0 0 0 44 0z" fill="#45a6e8" />
    <path d="M18 13c3-2.500 13-3 12.500 4-.5 5-7 6-7 11.500" stroke="#fff" strokeWidth="3.200" /><circle cx="23.700" cy="34.500" r="2.400" fill="#fff" />
  </> },
];

const trashArt = <g transform="translate(0 -1)">
  <rect x="6" y="2" width="36" height="44" rx="4" fill="#c9c9c9" stroke="#e3e3e3" /><rect x="9" y="5" width="30" height="6" rx="3" fill="#777" />
  <g fill="#228a1c" stroke="#228a1c">
    {[0, 120, 240].map(angle => (
      <g key={angle} transform={`rotate(${angle} 24 31)`}><path d="M19 26.500l3-4.500h4l2 3.500" fill="none" strokeWidth="4.400" /><path d="M31.500 23v6h-6z" strokeWidth=".5" /></g>
    ))}
  </g>
</g>;

const gridDots = [0, 1, 2].flatMap(r => [0, 1, 2].map(col => (
  <rect key={`${r}${col}`} x={9 + col * 12} y={9 + r * 12} width="6" height="6" rx="1.500" fill="#f4f4f4" />
)));

/* ---------- sheet data ---------- */

type Value = { v: string; face: Face; right?: boolean };
const a = (v: string): Value => ({ v, face: 'arial' });
const c = (v: string): Value => ({ v, face: 'cjk' });
const n = (v: number): Value => ({ v: String(v), face: 'cjk', right: true });

const cells: Record<string, Value> = { D1: a('Marks'), E1: a('Remarks'), D9: a('Students'), E9: a('Marks'), F9: a('PassPPassassss') };
([[0, 'Fail'], [30, 'Pass'], [60, 'Average'], [80, 'Above average'], [90, 'Excellent'], [100, 'Exceptional!']] as [number, string][])
  .forEach(([mark, remark], k) => { cells[`D${k + 2}`] = n(mark); cells[`E${k + 2}`] = a(remark); });
([['Benedict', 42, 'Pass'], ['Blake', 94, 'Excellent'], ['Bey', 33, 'Pass'], ['Arnold', 6, 'Fail'], ['Clint', 86, 'Above average'],
  ['Olivia', 67, 'Average'], ['Parah', 59, 'Pass'], ['Elijah', 60, 'Average'], ['Tom', 10, 'Fail'], ['John', 85, 'Above average'],
  ['Kanye', 5, 'Fail'], ['Reese', 73, ''], ['Swan', 100, 'Pass'], ['50 Dollar', 32, '']] as [string, number, string][])
  .forEach(([name, mark, remark], k) => {
    cells[`D${k + 10}`] = a(name);
    cells[`E${k + 10}`] = n(mark);
    if (remark) cells[`F${k + 10}`] = c(remark);
  });

const columns = 'ABCDEFGHIJKLMNOPQRSTUV'.split('');
const rows = Array.from({ length: 42 }, (_, k) => k + 1);

const Sheet = () => (
  <Grid>
    <colgroup>
      <col style={{ width: 41 }} />
      {columns.map(col => <col key={col} style={{ width: 78 }} />)}
      <col />
    </colgroup>
    <thead>
      <tr>
        <HeadCell />
        {columns.map(col => <HeadCell key={col} scope="col" $active={col === 'F'}>{col}</HeadCell>)}
        <HeadCell />
      </tr>
    </thead>
    <tbody>
      {rows.map(r => (
        <tr key={r}>
          <RowHead scope="row" $active={r === 21}>{r}</RowHead>
          {columns.map(col => {
            const key = `${col}${r}`;
            const cell = cells[key];
            return (
              <Cell key={key} $face={cell?.face} $right={cell?.right}>
                {cell?.v}
                {key === 'F21' && <Selection />}
                {key === 'F11' && (
                  <Pointer width="20" height="28" viewBox="0 0 20 28" aria-hidden="true">
                    <path d="M2 2v19l4.500-4 3.500 8 4-2-3.500-7.500H16z" fill="#333" stroke="#fff" strokeWidth="1.500" />
                  </Pointer>
                )}
              </Cell>
            );
          })}
          <Cell />
        </tr>
      ))}
      <tr>
        <StubCell />
        {columns.map(col => <StubCell key={col} />)}
        <StubCell />
      </tr>
    </tbody>
  </Grid>
);

/* ---------- page ---------- */

const menus = ['File', 'Edit', 'View', 'Insert', 'Format', 'Styles', 'Sheet', 'Data', 'Tools', 'Window', 'Help'];

const InfoIcon = () => (
  <Svg w={30} h={30}>
    <circle cx="15" cy="15" r="14.500" fill="#1c80d0" stroke="#55788f" />
    <path d="M1 15.500a14 14 0 0 0 28 0z" fill="#45a3e0" />
    <circle cx="15.500" cy="7" r="2" fill="#fff" /><path d="M15.500 11v13" stroke="#fff" strokeWidth="4" />
  </Svg>
);

const Notice = ({ text, action }: { text: string; action: string }) => (
  <InfoBar role="status">
    <InfoIcon />
    <InfoText>{text}</InfoText>
    <InfoAction type="button">{action}</InfoAction>
    <InfoClose type="button" aria-label="Dismiss">
      <Svg w={16} h={16}><path d="M.5.5l15 15m0-15l-15 15" stroke="#0b4f8a" strokeWidth="2" /></Svg>
    </InfoClose>
  </InfoBar>
);

export default function App() {
  return (
    <Desktop>
      <GlobalStyle />
      <TopBar>
        <TopGroup>
          <TopButton type="button">Activities</TopButton>
          <AppMenu type="button">
            <Svg w={14} h={16}>
              <path d="M1 1h12v14H1z" fill="#e6e6e6" />
              <path d="M3 5.500h8v6H3zM3 8.500h8M6 5.500v6M9 5.500v6" stroke="#333" />
            </Svg>
            LibreOffice Calc
          </AppMenu>
        </TopGroup>
        <Clock type="button">
          {'Apr 21  20:54'}
          <Svg w={14} h={18}>
            <path d="M1 13.500h12M3.500 13V7a3.500 4 0 0 1 7 0v6M1.500 6q0-3 2-5M12.500 6q0-3-2-5" stroke="#e6e6e6" strokeWidth="1.200" />
            <path d="M5 15h4l-2 2z" fill="#e6e6e6" />
          </Svg>
        </Clock>
        <TopGroup $end>
          <Svg w={16} h={16}>
            <path d="M1 5h3l4-4v14l-4-4H1z" fill="#f0f0f0" />
            <path d="M10 5.500q2 2.500 0 5M12 3.500q4 4.500 0 9" stroke="#d0d0d0" />
          </Svg>
          <Svg w={16} h={16}>
            <path d="M4.500 3a6 6 0 1 0 7 0M8 1v7" stroke="#f0f0f0" strokeWidth="1.400" />
          </Svg>
        </TopGroup>
      </TopBar>

      <Workspace>
        <Dock aria-label="Dock">
          {dockIcons.map(d => (
            <DockItem key={d.label} type="button" aria-label={d.label} $active={d.active}>
              <Svg w={48} h={48}>{d.art}</Svg>
              {d.active && <RunningDot />}
            </DockItem>
          ))}
          <DockRule />
          <DockItem type="button" aria-label="Trash"><Svg w={48} h={48}>{trashArt}</Svg></DockItem>
          <DockItem type="button" aria-label="Show applications" $last><Svg w={48} h={48}>{gridDots}</Svg></DockItem>
        </Dock>

        <Window>
          <TitleBar>
            <Title>Student_Grades_and_Remarks.xlsx - LibreOffice Calc</Title>
            <WindowControls>
              <WindowButton type="button" aria-label="Minimize"><Svg w={8} h={8}><path d="M0 6.500h8" stroke="#333" /></Svg></WindowButton>
              <WindowButton type="button" aria-label="Restore"><Svg w={8} h={8}><path d="M.5 2.500h5v5h-5z" stroke="#333" /><path d="M2 .5h5.500V6" stroke="#888" /></Svg></WindowButton>
              <WindowButton type="button" aria-label="Close"><Svg w={8} h={8}><path d="M0 0l8 8m0-8L0 8" stroke="#333" strokeWidth="1.400" /></Svg></WindowButton>
            </WindowControls>
          </TitleBar>

          <MenuRow>
            <MenuBar aria-label="Menu bar">
              {menus.map(m => <MenuItem key={m} type="button">{m}</MenuItem>)}
            </MenuBar>
            <CloseDocument type="button" aria-label="Close document"><Svg w={8} h={8}><path d="M0 0l8 8m0-8L0 8" stroke="#333" strokeWidth="1.400" /></Svg></CloseDocument>
          </MenuRow>

          <Toolbar><Tools items={standardTools} /></Toolbar>
          <Toolbar>
            <Combo $width={221} $gap>
              <ComboInput aria-label="Font name" defaultValue="微软雅黑" $italic />
              <ComboArrow type="button" aria-label="Show fonts"><Chevron /></ComboArrow>
            </Combo>
            <Combo $width={101}>
              <ComboInput aria-label="Font size" defaultValue="10 pt" />
              <ComboArrow type="button" aria-label="Show sizes"><Chevron /></ComboArrow>
            </Combo>
            <Tools items={formatTools} />
          </Toolbar>

          <Body>
            <DocumentArea>
              <FormulaRow>
                <Combo $width={173}>
                  <ComboInput aria-label="Name box" defaultValue="F21" />
                  <ComboArrow type="button" aria-label="Show names"><Chevron /></ComboArrow>
                </Combo>
                <Separator />
                <FormulaTools>
                  <FormulaButton type="button" aria-label="Function wizard" $width={24}><Svg>{icons.fx}</Svg></FormulaButton>
                  <FormulaButton type="button" aria-label="Select function" $width={35}><Svg>{icons.sigma}</Svg><Arrow /></FormulaButton>
                  <FormulaButton type="button" aria-label="Formula" $width={27}><Svg>{icons.equals}</Svg></FormulaButton>
                </FormulaTools>
                <FormulaInput aria-label="Formula input" />
                <ExpandButton type="button" aria-label="Expand formula bar"><Chevron /></ExpandButton>
              </FormulaRow>

              <Notice text="Help us make LibreOffice even better!" action="Get involved" />
              <Notice text="Your donations support our worldwide community." action="Donate" />

              <SheetArea>
                <GridClip><Sheet /></GridClip>
                <VScroll><SplitHandle /><VThumb /></VScroll>
              </SheetArea>
              <HScroll><HThumb /><SplitHandle $vertical /></HScroll>

              <TabRow>
                <TabNav type="button" aria-label="First sheet"><Svg w={16} h={12}><path d="M1 0v12M4 6h12" stroke="#f79c80" strokeWidth="2" /><path d="M2 6l5-4v8z" fill="#f79c80" /></Svg></TabNav>
                <TabNav type="button" aria-label="Previous sheet"><Svg w={16} h={10}><path d="M.5 1v8" stroke="#999" /><path d="M1 5l7-4v8zM8 5l7-4v8z" fill="#999" /></Svg></TabNav>
                <TabNav type="button" aria-label="Next sheet"><Svg w={16} h={10}><path d="M15.500 1v8" stroke="#999" /><path d="M15 5L8 1v8zM8 5L1 1v8z" fill="#999" /></Svg></TabNav>
                <TabNav type="button" aria-label="Last sheet"><Svg w={16} h={12}><path d="M15 0v12M0 6h12" stroke="#f79c80" strokeWidth="2" /><path d="M14 6L9 2v8z" fill="#f79c80" /></Svg></TabNav>
                <AddSheet type="button" aria-label="Add sheet"><Svg w={16} h={18}><path d="M1.500 2l1-1h7l5 5v9l-1 1.500h-11l-1-1z" fill="#fff" stroke={G} /><path d="M9.500 1v5h5" stroke={G} /><Badge x={12} y={13.500} c="#188a1c" plus /></Svg></AddSheet>
                <SheetTab type="button">工作表1</SheetTab>
              </TabRow>
            </DocumentArea>

            <Sidebar>
              <SideButton type="button" aria-label="Sidebar settings" $menu><Svg w={10} h={10}><path d="M0 .5h10M0 5h10M0 9.500h10" stroke="#333" /></Svg></SideButton>
              <SideButton type="button" aria-label="Properties" $active><Svg>{icons.sideProps}</Svg></SideButton>
              <SideButton type="button" aria-label="Styles"><Svg>{icons.sideStyles}</Svg></SideButton>
              <SideButton type="button" aria-label="Gallery"><Svg>{icons.sideGallery}</Svg></SideButton>
              <SideButton type="button" aria-label="Navigator"><Svg>{icons.sideNav}</Svg></SideButton>
              <SideButton type="button" aria-label="Functions"><Svg>{icons.sideFx}</Svg></SideButton>
              <SideHandle type="button" aria-label="Collapse sidebar"><Svg w={5} h={8}><path d="M0 0l5 4-5 4z" fill="#fff" /></Svg></SideHandle>
            </Sidebar>
          </Body>

          <StatusBar>
            <StatusItem $align="left">Sheet 1 of 1</StatusItem>
            <StatusItem />
            <StatusItem $align="left">PageStyle_工作表1</StatusItem>
            <StatusItem>English (Hong Kong)</StatusItem>
            <StatusItem />
            <StatusItem><Svg w={18} h={12}><path d="M.5 3.500h9v6h-9z" stroke={ORANGE} strokeWidth="1.400" /><path d="M13 1.500h4M13 10.500h4M15 1.500v9" stroke="#333" /></Svg></StatusItem>
            <StatusItem><Svg w={14} h={14}><path d="M5 3h3v4h2.500l-4 5-4-5H5z" fill="#98cf45" stroke="#5f7d33" /><circle cx="11" cy="3" r="1.500" fill={R} /></Svg></StatusItem>
            <StatusItem />
            <StatusItem>Average: ; Sum: 0</StatusItem>
            <ZoomItem>
              <Svg w={9} h={9}><path d="M0 4.500h9" stroke="#555" strokeWidth="2" /></Svg>
              <ZoomSlider type="range" aria-label="Zoom" min={0} max={100} defaultValue={50} />
              <Svg w={9} h={9}><path d="M0 4.500h9M4.500 0v9" stroke="#555" strokeWidth="2" /></Svg>
            </ZoomItem>
            <StatusItem $align="left">100%</StatusItem>
          </StatusBar>
        </Window>
      </Workspace>
    </Desktop>
  );
}
